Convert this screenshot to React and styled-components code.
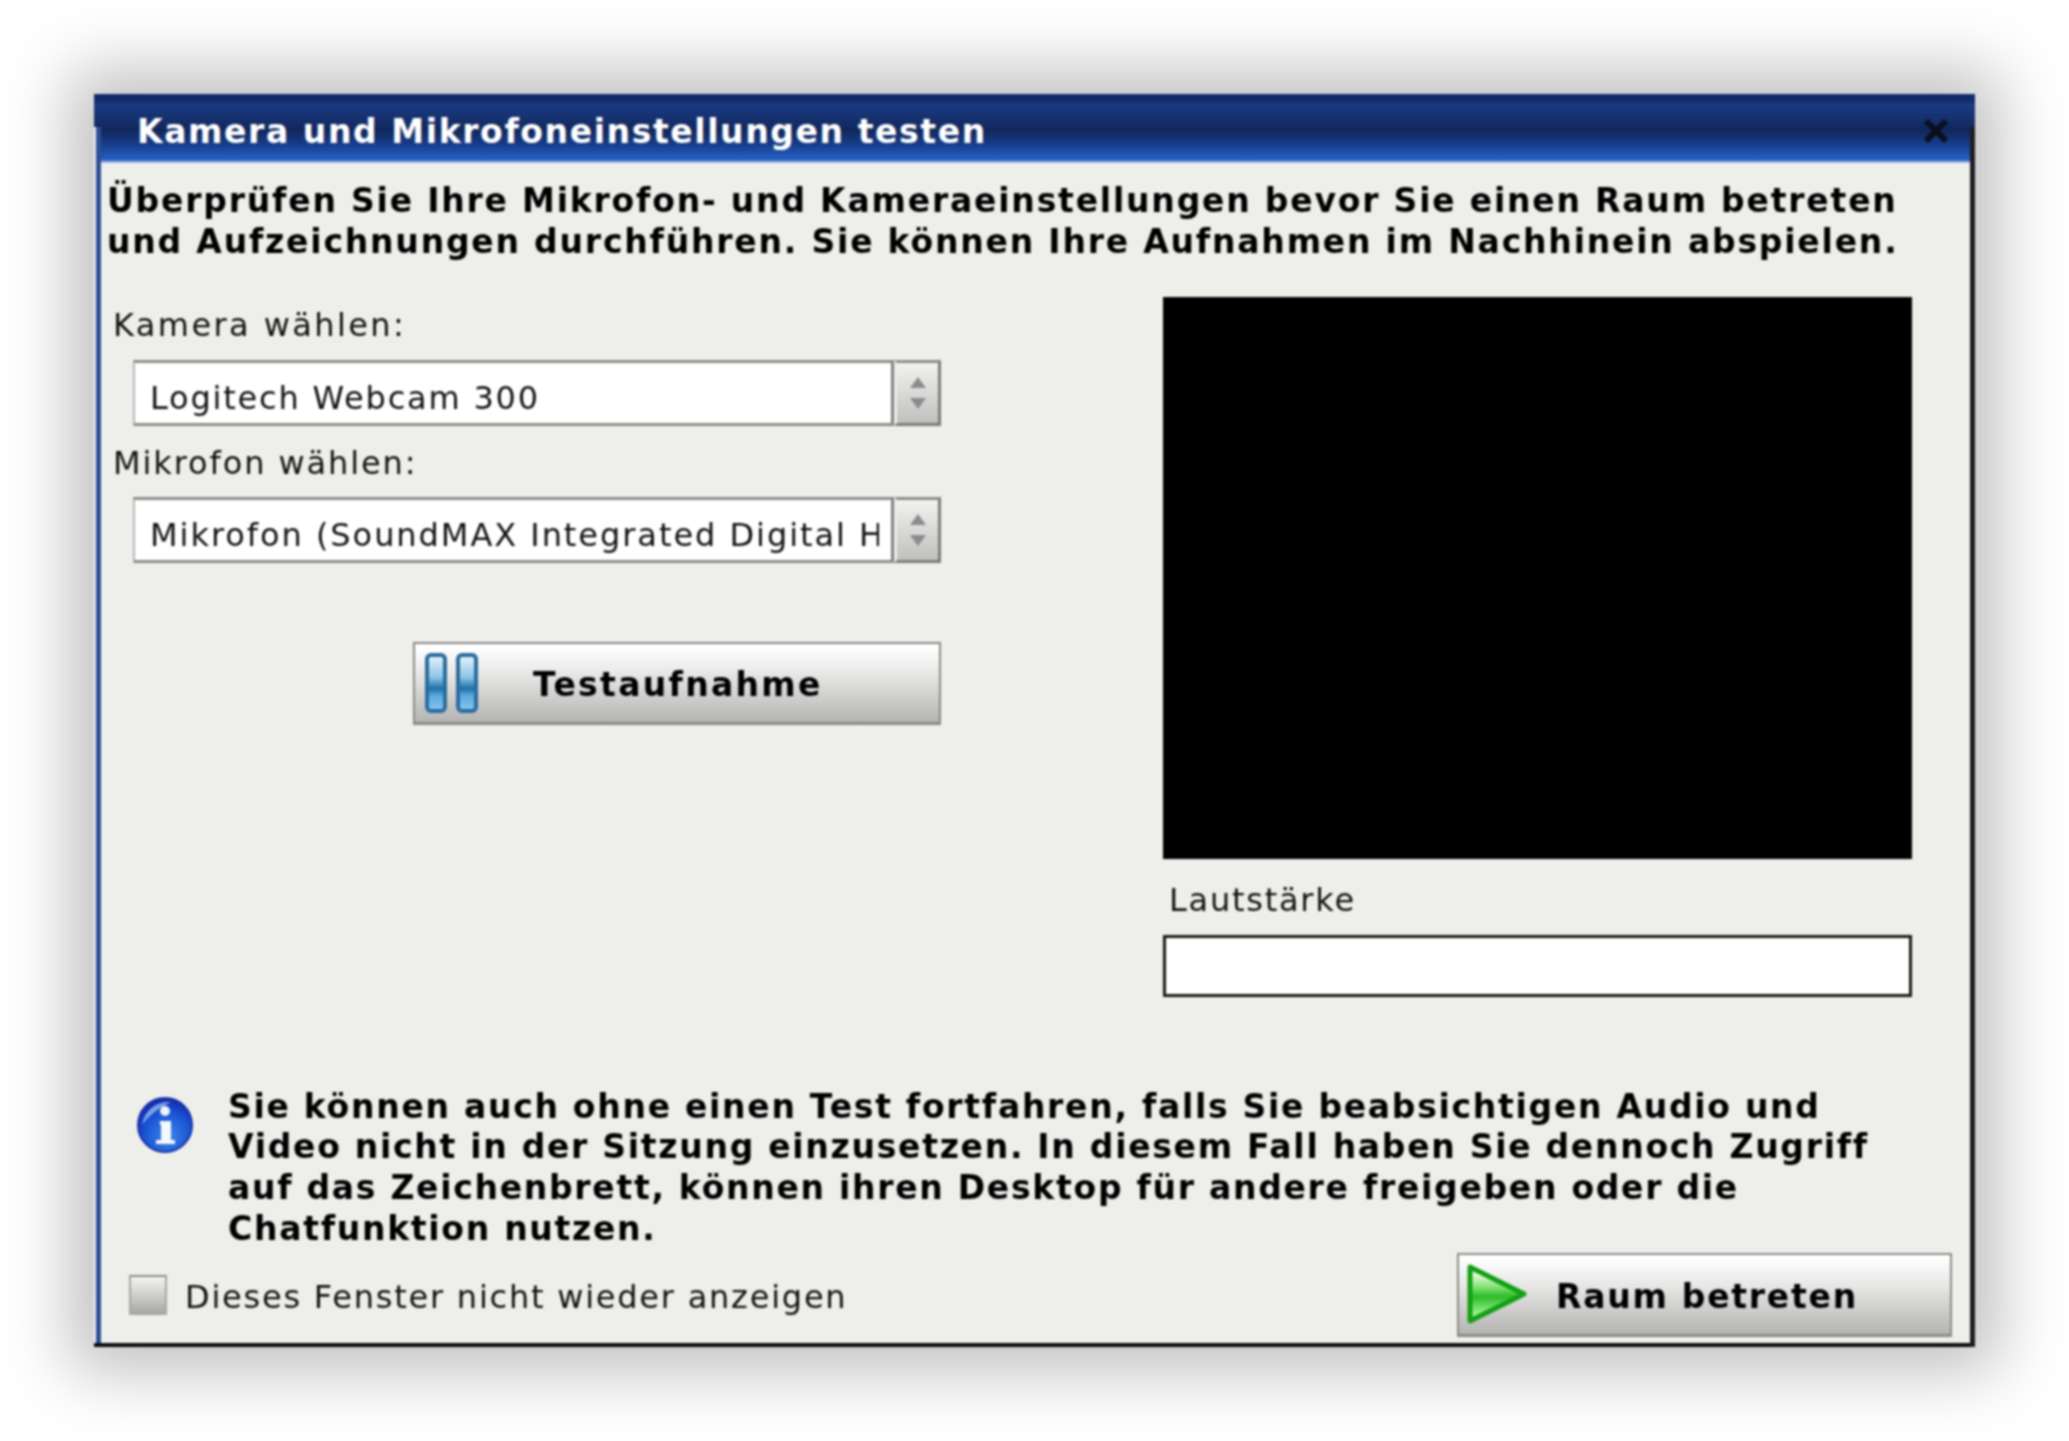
import React from "react";
import styled, { createGlobalStyle } from "styled-components";

const GlobalStyle = createGlobalStyle`
  html, body {
    margin: 0;
    background: #fff;
  }
  * {
    box-sizing: border-box;
  }
`;

const Page = styled.div`
  width: 2069px;
  height: 1441px;
  padding: 94px;
  overflow: hidden;
  font-family: "DejaVu Sans", sans-serif;
  color: #000;
`;

const Dialog = styled.div`
  position: relative;
  display: flex;
  flex-flow: column;
  width: 1881px;
  height: 1253px;
  background: #eeefeb;
  border-bottom: 4px solid #0c0c12;
  box-shadow: 0 0 62px 24px rgba(0, 0, 0, 0.25);
  filter: blur(0.9px);
  &::before {
    content: "";
    position: absolute;
    left: 0;
    top: 33px;
    bottom: 0;
    width: 5px;
    border-left: 2px solid #eceeee;
    background: #2d4f94;
  }
  &::after {
    content: "";
    position: absolute;
    right: 0;
    top: 33px;
    bottom: -4px;
    width: 5px;
    background: #1d1d1f;
  }
`;

const TitleBar = styled.div`
  display: flex;
  align-items: center;
  justify-content: space-between;
  height: 69px;
  padding: 5px 26px 0 43px;
  background: linear-gradient(
    #12296a 0,
    #12296a 5px,
    #1a3a80 12px,
    #152f6c 26px,
    #11275a 36px,
    #173c88 50px,
    #2560c6 66px,
    #a4bbdf 68px
  );
`;

const Title = styled.h1`
  margin: 0;
  font-size: 33px;
  font-weight: 700;
  letter-spacing: 1.6px;
  color: #fff;
  white-space: nowrap;
`;

const CloseIcon = styled.svg`
  width: 26px;
  height: 26px;
`;

const Body = styled.div`
  display: flex;
  flex-flow: column;
  flex: 1;
  padding: 18px 23px 0 13px;
`;

const BoldText = styled.p`
  margin: 0;
  font-size: 33px;
  font-weight: 700;
  letter-spacing: ${(props) => props.$spacing}px;
  line-height: 40.8px;
  white-space: nowrap;
`;

const MainRow = styled.div`
  display: grid;
  grid-template-columns: 834px 749px;
  column-gap: 222px;
  margin-top: 34px;
`;

const LeftColumn = styled.div`
  display: flex;
  flex-flow: column;
`;

const RightColumn = styled.div`
  display: flex;
  flex-flow: column;
`;

const Label = styled.label`
  display: block;
  margin: ${(props) => props.$margin};
  font-size: 32px;
  letter-spacing: ${(props) => props.$spacing || 1.75}px;
  line-height: 41px;
  white-space: nowrap;
  color: #111;
`;

const SelectBox = styled.div`
  display: flex;
  height: 66px;
  margin: ${(props) => props.$margin};
`;

const SelectField = styled.div`
  flex: 1;
  display: flex;
  align-items: center;
  padding: 10px 12px 0 15px;
  background: #fff;
  border-top: 3px solid #8d8d8b;
  border-bottom: 3px solid #8d8d8b;
  border-left: 2px solid #b6b6b4;
  border-right: 3px solid #80807e;
  font-size: 32px;
  letter-spacing: ${(props) => props.$spacing}px;
  color: #111;
  min-width: 0;
`;

const SelectText = styled.span`
  display: block;
  overflow: hidden;
  white-space: nowrap;
`;

const Stepper = styled.div`
  display: flex;
  flex-flow: column;
  align-items: center;
  justify-content: center;
  width: 47px;
  gap: 10px;
  background: linear-gradient(#f2f2f1, #c0c0bf);
  border-top: 3px solid #8d8d8b;
  border-bottom: 3px solid #7c7c7a;
  border-right: 3px solid #7c7c7a;
  border-left: 3px solid #eceeea;
`;

const Button = styled.button`
  display: flex;
  align-items: center;
  padding: ${(props) => props.$padding};
  width: ${(props) => props.$width}px;
  height: ${(props) => props.$height}px;
  background: linear-gradient(#ffffff 4%, #e6e6e5 40%, #b4b4b3 100%);
  border: 2px solid #8a8a88;
  border-bottom-width: 3px;
  border-radius: 0;
  font-family: inherit;
  font-size: 33px;
  font-weight: 700;
  letter-spacing: ${(props) => props.$spacing}px;
  color: #000;
  white-space: nowrap;
`;

const TestButton = styled(Button)`
  align-self: flex-end;
  margin-top: 79px;
  gap: 54px;
`;

const EnterButton = styled(Button)`
  gap: 29px;
`;

const ButtonLabel = styled.span`
  padding-top: ${(props) => props.$top}px;
`;

const VideoArea = styled.div`
  height: 562px;
  background: #000;
`;

const VolumeMeter = styled.div`
  height: 62px;
  margin-top: 14px;
  background: #fff;
  border: 3px solid #1a1a1a;
`;

const InfoRow = styled.div`
  display: flex;
  align-items: flex-start;
  gap: 35px;
  margin-top: 90px;
  padding-left: 30px;
`;

const InfoIcon = styled.svg`
  flex: none;
  width: 56px;
  height: 56px;
  margin-top: 10px;
`;

const Footer = styled.div`
  display: flex;
  align-items: center;
  justify-content: space-between;
  margin-top: 3px;
  padding-left: 22px;
`;

const CheckRow = styled.div`
  display: flex;
  align-items: center;
  gap: 18px;
  font-size: 32px;
  letter-spacing: 1.77px;
  color: #111;
  white-space: nowrap;
`;

const CheckText = styled.span`
  padding-top: 4px;
`;

const CheckBox = styled.span`
  display: block;
  width: 38px;
  height: 40px;
  background: linear-gradient(#f4f4f3, #a9a9a8);
  border: 2px solid #a6a6a4;
  border-top-color: #8a8a88;
`;

function StepArrow({ down }) {
  return (
    <svg width="16" height="11" viewBox="0 0 16 11">
      <path d={down ? "M0 0h16l-8 11z" : "M8 0l8 11H0z"} fill="#8c8c8c" />
    </svg>
  );
}

function PauseIcon() {
  return (
    <svg width="54" height="60" viewBox="0 0 54 60" style={{ flex: "none" }}>
      <defs>
        <linearGradient id="bar" x1="0" y1="0" x2="0" y2="1">
          <stop offset="0" stopColor="#eaf7fc" />
          <stop offset="0.4" stopColor="#8cc4e6" />
          <stop offset="0.6" stopColor="#1f6fa8" />
          <stop offset="0.72" stopColor="#5aa6dc" />
          <stop offset="1" stopColor="#8ccaf2" />
        </linearGradient>
      </defs>
      <rect x="2" y="2" width="18" height="56" rx="4" fill="url(#bar)" stroke="#2a6c9e" strokeWidth="4" />
      <rect x="33" y="2" width="18" height="56" rx="4" fill="url(#bar)" stroke="#2a6c9e" strokeWidth="4" />
    </svg>
  );
}

function PlayIcon() {
  return (
    <svg width="60" height="60" viewBox="0 0 60 60" style={{ flex: "none" }}>
      <defs>
        <linearGradient id="play" x1="0" y1="0" x2="0" y2="1">
          <stop offset="0.15" stopColor="#e4f9dc" />
          <stop offset="0.38" stopColor="#7ee070" />
          <stop offset="0.55" stopColor="#2cbc28" />
          <stop offset="0.85" stopColor="#98f08e" />
        </linearGradient>
      </defs>
      <path
        d="M3 3L57 30L3 57Z"
        fill="url(#play)"
        stroke="#12a014"
        strokeWidth="5"
        strokeLinejoin="round"
      />
    </svg>
  );
}

function App() {
  return (
    <Page>
      <GlobalStyle />
      <Dialog>
        <TitleBar>
          <Title>Kamera und Mikrofoneinstellungen testen</Title>
          <CloseIcon viewBox="0 0 26 26">
            <path
              d="M3 3L23 23M23 3L3 23"
              stroke="#0a0f1e"
              strokeWidth="6"
              fill="none"
            />
          </CloseIcon>
        </TitleBar>
        <Body>
          <BoldText $spacing={1.8}>
            Überprüfen Sie Ihre Mikrofon- und Kameraeinstellungen bevor Sie einen Raum betreten
            <br />
            und Aufzeichnungen durchführen. Sie können Ihre Aufnahmen im Nachhinein abspielen.
          </BoldText>
          <MainRow>
            <LeftColumn>
              <Label $margin="8px 0 0 6px" $spacing={2.4}>Kamera wählen:</Label>
              <SelectBox $margin="14px 0 0 26px">
                <SelectField $spacing={1.8}>
                  <SelectText>Logitech Webcam 300</SelectText>
                </SelectField>
                <Stepper>
                  <StepArrow />
                  <StepArrow down />
                </Stepper>
              </SelectBox>
              <Label $margin="17px 0 0 6px" $spacing={1.9}>Mikrofon wählen:</Label>
              <SelectBox $margin="13px 0 0 26px">
                <SelectField $spacing={1.95}>
                  <SelectText>Mikrofon (SoundMAX Integrated Digital H</SelectText>
                </SelectField>
                <Stepper>
                  <StepArrow />
                  <StepArrow down />
                </Stepper>
              </SelectBox>
              <TestButton $width={528} $height={83} $padding="0 0 0 10px" $spacing={2.3}>
                <PauseIcon />
                <ButtonLabel $top={4}>Testaufnahme</ButtonLabel>
              </TestButton>
            </LeftColumn>
            <RightColumn>
              <VideoArea />
              <Label $margin="21px 0 0 6px">Lautstärke</Label>
              <VolumeMeter />
            </RightColumn>
          </MainRow>
          <InfoRow>
            <InfoIcon viewBox="0 0 56 56">
              <defs>
                <radialGradient id="info" cx="0.55" cy="0.7" r="0.7">
                  <stop offset="0" stopColor="#3f86e6" />
                  <stop offset="0.6" stopColor="#1a55d4" />
                  <stop offset="1" stopColor="#1228a8" />
                </radialGradient>
              </defs>
              <circle cx="28" cy="28" r="27" fill="url(#info)" stroke="#1a2fa8" strokeWidth="2" />
              <path d="M5 28C8 12 20 4 34 5C24 10 14 16 5 28Z" fill="#9cc0f4" opacity="0.75" />
              <circle cx="28" cy="14" r="5" fill="#eef4fc" />
              <path d="M23 24H34V43H38V47H19V43H24V28H23Z" fill="#f4f8fc" />
            </InfoIcon>
            <BoldText $spacing={1.72}>
              Sie können auch ohne einen Test fortfahren, falls Sie beabsichtigen Audio und
              <br />
              Video nicht in der Sitzung einzusetzen. In diesem Fall haben Sie dennoch Zugriff
              <br />
              auf das Zeichenbrett, können ihren Desktop für andere freigeben oder die
              <br />
              Chatfunktion nutzen.
            </BoldText>
          </InfoRow>
          <Footer>
            <CheckRow>
              <CheckBox />
              <CheckText>Dieses Fenster nicht wieder anzeigen</CheckText>
            </CheckRow>
            <EnterButton $width={495} $height={84} $padding="0 0 0 8px" $spacing={1.75}>
              <PlayIcon />
              <ButtonLabel $top={4}>Raum betreten</ButtonLabel>
            </EnterButton>
          </Footer>
        </Body>
      </Dialog>
    </Page>
  );
}

export default App;
